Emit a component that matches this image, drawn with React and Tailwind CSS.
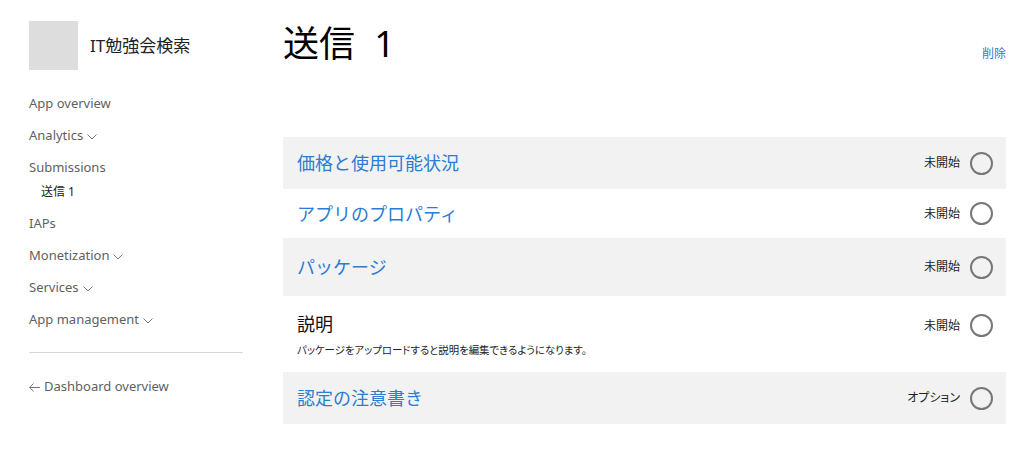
import React from 'react';

const font = { fontFamily: '"Noto Sans", "Noto Sans CJK JP", sans-serif' };

function Chevron() {
  return (
    <svg width="10" height="6" viewBox="0 0 10 6" className="ml-[4px] mt-[2px]">
      <polyline points="0.5,0.5 5,5 9.5,0.5" fill="none" stroke="#777" strokeWidth="1" />
    </svg>
  );
}

function NavItem({ label, chevron }) {
  return (
    <div className="h-[32px] flex items-center text-[13px] text-[#5f5f5f]">
      <span>{label}</span>
      {chevron && <Chevron />}
    </div>
  );
}

const rows = [
  { title: '価格と使用可能状況', status: '未開始', gray: true, h: 'h-[52px]' },
  { title: 'アプリのプロパティ', status: '未開始', gray: false, h: 'h-[49px]' },
  { title: 'パッケージ', status: '未開始', gray: true, h: 'h-[58px]' },
  {
    title: '説明',
    status: '未開始',
    gray: false,
    h: 'h-[76px]',
    plain: true,
    desc: 'パッケージをアップロードすると説明を編集できるようになります。',
  },
  { title: '認定の注意書き', status: 'オプション', gray: true, h: 'h-[52px]' },
];

export default function App() {
  return (
    <div className="w-[1024px] h-[453px] bg-white flex overflow-hidden" style={font}>
      {/* Sidebar */}
      <aside className="w-[243px] pl-[29px] pt-[21px] shrink-0">
        <div className="flex items-center">
          <div className="w-[49px] h-[49px] bg-[#dddddd]" />
          <span className="ml-[12px] text-[17px] text-[#222]">IT勉強会検索</span>
        </div>
        <nav className="mt-[18px]">
          <NavItem label="App overview" />
          <NavItem label="Analytics" chevron />
          <NavItem label="Submissions" />
          <div className="-mt-[4px] mb-[4px] h-[24px] flex items-center pl-[12px] text-[12px] text-[#222]">
            送信 1
          </div>
          <NavItem label="IAPs" />
          <NavItem label="Monetization" chevron />
          <NavItem label="Services" chevron />
          <NavItem label="App management" chevron />
        </nav>
        <div className="mt-[16px] border-t border-[#d6d6d6]" />
        <div className="mt-[18px] h-[32px] flex items-center text-[13px] text-[#5f5f5f]">
          <svg width="11" height="9" viewBox="0 0 11 9" className="mr-[4px]">
            <polyline points="4.5,0.5 0.7,4.5 4.5,8.5" fill="none" stroke="#777" strokeWidth="1" />
            <line x1="0.7" y1="4.5" x2="11" y2="4.5" stroke="#777" strokeWidth="1" />
          </svg>
          <span>Dashboard overview</span>
        </div>
      </aside>

      {/* Main */}
      <main className="ml-[40px] w-[723px] pt-[22px]">
        <div className="flex justify-between items-start">
          <h1 className="text-[36px] leading-[44px] text-black font-normal [word-spacing:10px]">送信 1</h1>
          <button className="mt-[24px] text-[12px] leading-[16px] text-[#2b7cd3]">削除</button>
        </div>

        <div className="mt-[71px] flex flex-col">
          {rows.map((r) => (
            <div
              key={r.title}
              className={`${r.h} flex items-center justify-between pl-[14px] pr-[13px] ${
                r.gray ? 'bg-[#f2f2f2]' : 'bg-white'
              }`}
            >
              <div className="flex flex-col">
                <span
                  className={`text-[18px] leading-[24px] ${
                    r.plain ? 'text-[#111]' : 'text-[#2b7cd3]'
                  }`}
                >
                  {r.title}
                </span>
                {r.desc && (
                  <span className="mt-[7px] text-[10.4px] leading-[14px] text-[#222] [font-feature-settings:'palt']">
                    {r.desc}
                  </span>
                )}
              </div>
              <div className={`flex items-center ${r.desc ? 'self-start mt-[18px]' : ''}`}>
                <span className="text-[12px] text-[#222] [font-feature-settings:'palt']">{r.status}</span>
                <span className="ml-[10px] w-[23px] h-[23px] rounded-full border-2 border-[#777]" />
              </div>
            </div>
          ))}
        </div>
      </main>
    </div>
  );
}
